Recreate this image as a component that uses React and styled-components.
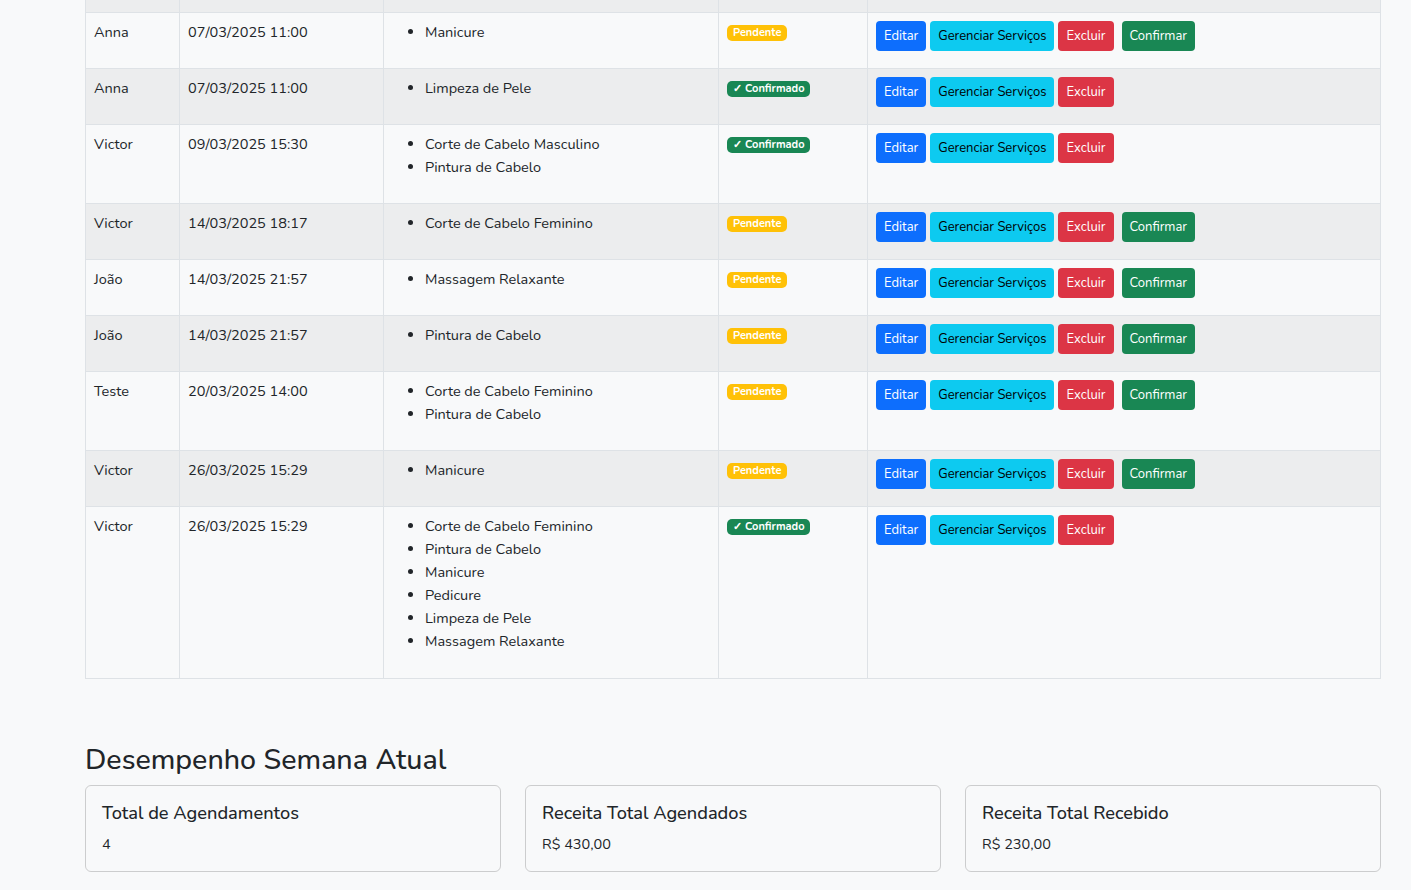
import React from 'react';
import styled, { createGlobalStyle } from 'styled-components';

const GlobalStyle = createGlobalStyle`
  body {
    margin: 0;
    background: #f8f9fa;
    color: #212529;
    font-family: 'Nunito', 'Lato', 'Noto Sans', sans-serif;
  }
`;

const Page = styled.div`
  width: 1296px;
  padding-left: 85px;
  margin-top: -44px;
  padding-bottom: 19px;
`;

const Table = styled.table`
  width: 100%;
  table-layout: fixed;
  border-collapse: collapse;
  font-size: 14.5px;
  line-height: 23px;
`;

const Row = styled.tr`
  background: ${(p) => (p.$striped ? '#ecedee' : '#f8f9fa')};
`;

const Cell = styled.td`
  border: 1px solid #dee2e6;
  padding: 8px;
  vertical-align: top;
  height: ${(p) => (p.$filler ? '39px' : 'auto')};
`;

const ServiceList = styled.ul`
  margin: 0 0 16px;
  padding-left: 33px;
  &:has(li:nth-child(6)) {
    margin-bottom: 17px;
  }
`;

const Badge = styled.span`
  display: inline-block;
  padding: 2px 6px;
  font-size: 11px;
  font-weight: 700;
  line-height: 1.1;
  color: #fff;
  border-radius: 5px;
  background: ${(p) => (p.$ok ? '#198754' : '#ffc107')};
  vertical-align: 1px;
`;

const Actions = styled.div`
  display: flex;
  align-items: center;
  gap: 4px;
`;

const Button = styled.button`
  height: 30px;
  padding: 0 8px;
  border: none;
  border-radius: 4px;
  font-family: inherit;
  font-size: 13px;
  color: ${(p) => p.$fg || '#fff'};
  background: ${(p) => p.$bg};
  margin-left: ${(p) => (p.$spaced ? '4px' : '0')};
  cursor: pointer;
`;

const Heading = styled.h3`
  margin: 64px 0 8px;
  font-size: 28.6px;
  font-weight: 500;
  line-height: 1.2;
`;

const CardGrid = styled.div`
  display: grid;
  grid-template-columns: repeat(3, 1fr);
  gap: 24px;
`;

const Card = styled.div`
  border: 1px solid rgba(0, 0, 0, 0.175);
  border-radius: 6px;
  padding: 16px 16px 15px;
`;

const CardTitle = styled.div`
  font-size: 18.2px;
  font-weight: 500;
  line-height: 1.25;
  margin-bottom: 9px;
`;

const CardValue = styled.div`
  font-size: 14.5px;
  line-height: 1.5;
`;

const bookings = [
  { name: 'Anna', date: '07/03/2025 11:00', services: ['Manicure'], ok: false },
  { name: 'Anna', date: '07/03/2025 11:00', services: ['Limpeza de Pele'], ok: true },
  { name: 'Victor', date: '09/03/2025 15:30', services: ['Corte de Cabelo Masculino', 'Pintura de Cabelo'], ok: true },
  { name: 'Victor', date: '14/03/2025 18:17', services: ['Corte de Cabelo Feminino'], ok: false },
  { name: 'João', date: '14/03/2025 21:57', services: ['Massagem Relaxante'], ok: false },
  { name: 'João', date: '14/03/2025 21:57', services: ['Pintura de Cabelo'], ok: false },
  { name: 'Teste', date: '20/03/2025 14:00', services: ['Corte de Cabelo Feminino', 'Pintura de Cabelo'], ok: false },
  { name: 'Victor', date: '26/03/2025 15:29', services: ['Manicure'], ok: false },
  {
    name: 'Victor',
    date: '26/03/2025 15:29',
    services: ['Corte de Cabelo Feminino', 'Pintura de Cabelo', 'Manicure', 'Pedicure', 'Limpeza de Pele', 'Massagem Relaxante'],
    ok: true,
  },
];

const stats = [
  { title: 'Total de Agendamentos', value: '4' },
  { title: 'Receita Total Agendados', value: 'R$ 430,00' },
  { title: 'Receita Total Recebido', value: 'R$ 230,00' },
];

const App = () => {
  return (
    <>
      <GlobalStyle />
      <Page>
        <Table>
          <colgroup>
            <col style={{ width: 94 }} />
            <col style={{ width: 204 }} />
            <col style={{ width: 335 }} />
            <col style={{ width: 149 }} />
            <col />
          </colgroup>
          <tbody>
            {/* tail of the row scrolled above the viewport */}
            <Row $striped>
              {[0, 1, 2, 3, 4].map((c) => (
                <Cell key={c} $filler />
              ))}
            </Row>
            {bookings.map((b, i) => (
              <Row key={i} $striped={i % 2 === 1}>
                <Cell>{b.name}</Cell>
                <Cell>{b.date}</Cell>
                <Cell>
                  <ServiceList>
                    {b.services.map((s) => (
                      <li key={s}>{s}</li>
                    ))}
                  </ServiceList>
                </Cell>
                <Cell>
                  {b.ok ? <Badge $ok>✓ Confirmado</Badge> : <Badge>Pendente</Badge>}
                </Cell>
                <Cell>
                  <Actions>
                    <Button $bg="#0d6efd">Editar</Button>
                    <Button $bg="#0dcaf0" $fg="#000">Gerenciar Serviços</Button>
                    <Button $bg="#dc3545">Excluir</Button>
                    {!b.ok && (
                      <Button $bg="#198754" $spaced>
                        Confirmar
                      </Button>
                    )}
                  </Actions>
                </Cell>
              </Row>
            ))}
          </tbody>
        </Table>

        <Heading>Desempenho Semana Atual</Heading>
        <CardGrid>
          {stats.map((s) => (
            <Card key={s.title}>
              <CardTitle>{s.title}</CardTitle>
              <CardValue>{s.value}</CardValue>
            </Card>
          ))}
        </CardGrid>
      </Page>
    </>
  );
};

export default App;
